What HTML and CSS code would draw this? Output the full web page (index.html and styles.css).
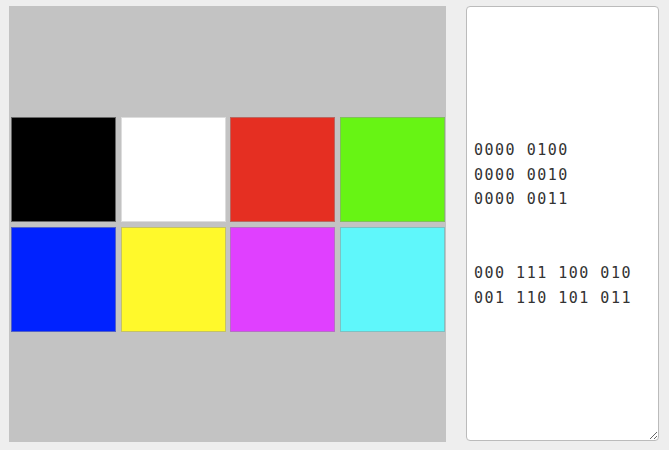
FILE: index.html
```html
<!DOCTYPE html>
<html>
<head>
<meta charset="utf-8">
<link rel="stylesheet" href="styles.css">
</head>
<body>
<div class="app">
  <div class="panel">
    <div class="grid">
      <div class="sw black"></div>
      <div class="sw white"></div>
      <div class="sw red"></div>
      <div class="sw green"></div>
      <div class="sw blue"></div>
      <div class="sw yellow"></div>
      <div class="sw magenta"></div>
      <div class="sw cyan"></div>
    </div>
  </div>
  <textarea class="out">0000 0100
0000 0010
0000 0011


000 111 100 010
001 110 101 011</textarea>
</div>
</body>
</html>
```
FILE: styles.css
```css
html, body {
  margin: 0;
  padding: 0;
  background: #eeeeee;
}
.app {
  display: flex;
  align-items: flex-start;
  padding: 6px 0 0 9px;
  gap: 20px;
}
.panel {
  width: 437px;
  height: 436px;
  background: #c3c3c3;
  display: flex;
  align-items: center;
  padding-left: 2px;
  box-sizing: border-box;
}
.grid {
  display: grid;
  grid-template-columns: repeat(4, 105px);
  grid-auto-rows: 105px;
  column-gap: 4.5px;
  row-gap: 5px;
}
.sw {
  box-sizing: border-box;
  border: 1px solid rgba(150, 150, 150, 0.55);
}
.black { background: #000000; border-color: #666666; }
.white { background: #ffffff; border-color: #dddddd; }
.red { background: #e52f22; }
.green { background: #67f414; }
.blue { background: #0022ff; }
.yellow { background: #fff92b; }
.magenta { background: #e040ff; }
.cyan { background: #5ff7fb; }
.out {
  width: 193px;
  height: 435px;
  box-sizing: border-box;
  margin: 0;
  border: 1px solid #bbbbbb;
  border-radius: 4px;
  background: #ffffff;
  padding: 131px 6px 0 7px;
  font-family: "DejaVu Sans Mono", monospace;
  font-size: 15px;
  letter-spacing: 1.5px;
  line-height: 24.6px;
  color: #333333;
  outline: none;
  resize: both;
}
```
